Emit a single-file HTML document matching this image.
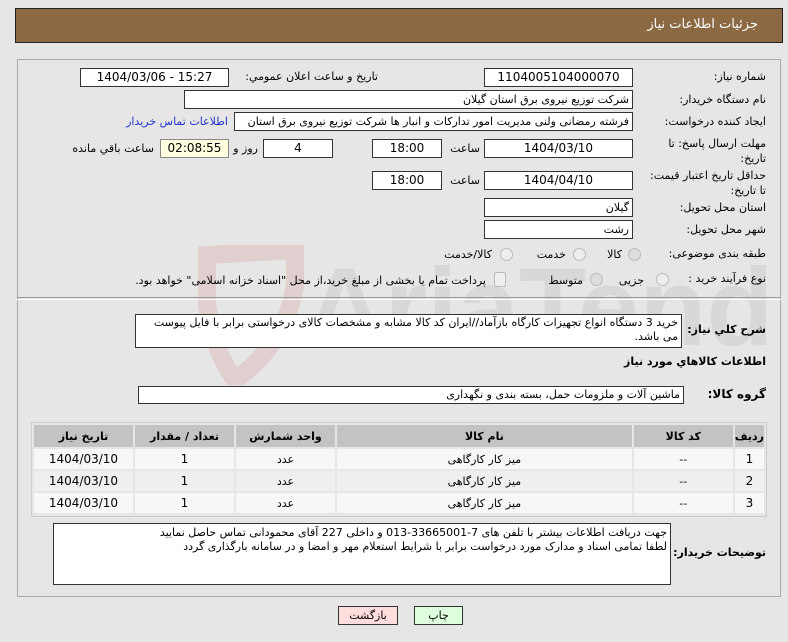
<!DOCTYPE html>
<html><head><meta charset="utf-8"><style>
body{margin:0;width:788px;height:642px;background:#e6e6e6;font-family:"DejaVu Sans",sans-serif;font-size:11px;color:#000;position:relative;overflow:hidden}
.a{position:absolute;white-space:nowrap}
.box{position:absolute;background:#fff;border:1px solid #333;box-sizing:border-box;height:19px;line-height:17px;text-align:center;font-size:12px}
.lbl{position:absolute;text-align:right;direction:rtl;white-space:nowrap}
.r{direction:rtl;text-align:right;padding-right:3px;font-size:11px}
.radio{position:absolute;width:13px;height:13px;border-radius:50%;border:1px solid #bbb;background:#eee;box-sizing:border-box}
table{border-collapse:separate;border-spacing:2px;}
td,th{text-align:center;height:20px;padding:0;font-size:11px}
td.n{font-size:12px}
th{background:#c3c3c3;font-weight:bold;height:22px}
tr.o td{background:#f7f7f7}
tr.e td{background:#efefef}
</style></head><body>
<div class="a" style="left:15px;top:8px;width:768px;height:35px;background:#8b6a43;border:1px solid #222;box-sizing:border-box"></div>
<div class="a" style="right:30px;top:17px;color:#fff;font-size:13px;direction:rtl">جزئیات اطلاعات نیاز</div>

<div class="a" style="left:17px;top:59px;width:764px;height:538px;border:1px solid #aaa;box-sizing:border-box"></div>

<svg class="a" style="left:195px;top:245px" width="580" height="140">
<path d="M12 10 L100 5 L100 40 Q90 100 40 135 Q20 110 12 60 Z" fill="none" stroke="rgba(200,80,80,0.15)" stroke-width="18"/>
<text x="110" y="100" font-family="Liberation Sans" font-weight="bold" font-size="110" fill="rgba(140,140,140,0.15)">AriaTender.net</text>
</svg>

<div class="lbl" style="right:22px;top:70px">شماره نیاز:</div>
<div class="box" style="left:484px;top:68px;width:149px">1104005104000070</div>
<div class="lbl" style="right:410px;top:70px">تاریخ و ساعت اعلان عمومي:</div>
<div class="box" style="left:80px;top:68px;width:149px">1404/03/06 - 15:27</div>

<div class="lbl" style="right:22px;top:93px">نام دستگاه خریدار:</div>
<div class="box r" style="left:184px;top:90px;width:449px">شرکت توزیع نیروی برق استان گیلان</div>

<div class="lbl" style="right:22px;top:115px">ایجاد کننده درخواست:</div>
<div class="box r" style="left:234px;top:112px;width:399px;overflow:hidden">فرشته رمضانی ولنی مدیریت امور تدارکات و انبار ها شرکت توزیع نیروی برق استان گیلان</div>
<div class="lbl" style="right:560px;top:115px;color:#2233cc">اطلاعات تماس خریدار</div>

<div class="lbl" style="right:22px;top:136px;line-height:15px">مهلت ارسال پاسخ: تا<br>تاریخ:</div>
<div class="box" style="left:484px;top:139px;width:149px">1404/03/10</div>
<div class="lbl" style="right:308px;top:142px">ساعت</div>
<div class="box" style="left:372px;top:139px;width:70px">18:00</div>
<div class="box" style="left:263px;top:139px;width:70px">4</div>
<div class="lbl" style="right:530px;top:142px">روز و</div>
<div class="box" style="left:160px;top:139px;width:69px;background:#ffffe0;border-color:#888">02:08:55</div>
<div class="lbl" style="right:634px;top:142px">ساعت باقي مانده</div>

<div class="lbl" style="right:22px;top:168px;line-height:15px">حداقل تاریخ اعتبار قیمت:<br>تا تاریخ:</div>
<div class="box" style="left:484px;top:171px;width:149px">1404/04/10</div>
<div class="lbl" style="right:308px;top:174px">ساعت</div>
<div class="box" style="left:372px;top:171px;width:70px">18:00</div>

<div class="lbl" style="right:22px;top:201px">استان محل تحویل:</div>
<div class="box r" style="left:484px;top:198px;width:149px">گیلان</div>
<div class="lbl" style="right:22px;top:223px">شهر محل تحویل:</div>
<div class="box r" style="left:484px;top:220px;width:149px">رشت</div>

<div class="lbl" style="right:22px;top:247px">طبقه بندی موضوعی:</div>
<div class="radio" style="left:628px;top:248px;background:#ddd"></div>
<div class="lbl" style="right:166px;top:248px">کالا</div>
<div class="radio" style="left:573px;top:248px"></div>
<div class="lbl" style="right:222px;top:248px">خدمت</div>
<div class="radio" style="left:500px;top:248px"></div>
<div class="lbl" style="right:296px;top:248px">کالا/خدمت</div>

<div class="lbl" style="right:22px;top:272px">نوع فرآیند خرید :</div>
<div class="radio" style="left:656px;top:273px"></div>
<div class="lbl" style="right:144px;top:274px">جزیی</div>
<div class="radio" style="left:590px;top:273px;background:#ddd"></div>
<div class="lbl" style="right:205px;top:274px">متوسط</div>
<div class="a" style="left:494px;top:272px;width:10px;height:13px;border:1px solid #bbb;background:#eee;border-radius:2px"></div>
<div class="lbl" style="right:302px;top:274px">پرداخت تمام یا بخشی از مبلغ خرید،از محل "اسناد خزانه اسلامی" خواهد بود.</div>

<div class="a" style="left:17px;top:297px;width:764px;border-top:1px solid #999;border-bottom:1px solid #fff;height:1px"></div>

<div class="lbl" style="right:22px;top:323px;font-weight:bold;font-size:11px">شرح کلي نیاز:</div>
<div class="a" style="left:135px;top:314px;width:547px;height:34px;background:#fff;border:1px solid #333;box-sizing:border-box;direction:rtl;white-space:normal;padding:1px 3px;line-height:14px;font-size:11px">خرید 3 دستگاه انواع تجهیزات کارگاه بازآماد//ایران کد کالا مشابه و مشخصات کالای درخواستی برابر با فایل پیوست می باشد.</div>

<div class="lbl" style="right:22px;top:355px;font-weight:bold">اطلاعات کالاهاي مورد نیاز</div>

<div class="lbl" style="right:22px;top:387px;font-weight:bold;font-size:12px">گروه کالا:</div>
<div class="box r" style="left:138px;top:386px;width:546px;height:18px;line-height:16px">ماشین آلات و ملزومات حمل، بسته بندی و نگهداری</div>

<div class="a" style="left:31px;top:422px;width:736px;height:95px;border:1px solid #ccc;box-sizing:border-box;background:#e6e6e6">
<table style="width:734px;direction:rtl">
<tr><th style="width:23px">ردیف</th><th style="width:99px">کد کالا</th><th>نام کالا</th><th style="width:99px">واحد شمارش</th><th style="width:99px">تعداد / مقدار</th><th style="width:99px">تاریخ نیاز</th></tr>
<tr class="o"><td class="n">1</td><td>--</td><td>میز کار کارگاهی</td><td>عدد</td><td class="n">1</td><td class="n">1404/03/10</td></tr>
<tr class="e"><td class="n">2</td><td>--</td><td>میز کار کارگاهی</td><td>عدد</td><td class="n">1</td><td class="n">1404/03/10</td></tr>
<tr class="o"><td class="n">3</td><td>--</td><td>میز کار کارگاهی</td><td>عدد</td><td class="n">1</td><td class="n">1404/03/10</td></tr>
</table></div>

<div class="lbl" style="right:22px;top:546px;font-weight:bold;font-size:11px">توضیحات خریدار:</div>
<div class="a" style="left:53px;top:523px;width:618px;height:62px;background:#fff;border:1px solid #333;box-sizing:border-box;direction:rtl;white-space:normal;padding:2px 3px;line-height:14px;font-size:11px">جهت دریافت اطلاعات بیشتر با تلفن های 7-33665001-013 و داخلی 227 آقای محمودانی تماس حاصل نمایید<br>لطفا تمامی اسناد و مدارک مورد درخواست برابر با شرایط استعلام مهر و امضا و در سامانه بارگذاری گردد</div>

<div class="a" style="left:338px;top:606px;width:60px;height:19px;background:#fdd;border:1px solid #333;box-sizing:border-box;text-align:center;line-height:17px">بازگشت</div>
<div class="a" style="left:414px;top:606px;width:49px;height:19px;background:#dfd;border:1px solid #333;box-sizing:border-box;text-align:center;line-height:17px">چاپ</div>
</body></html>
